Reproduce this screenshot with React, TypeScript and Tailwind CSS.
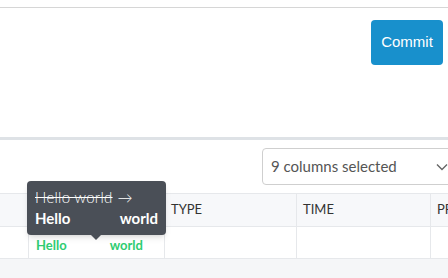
import React from 'react';

const cols = [
  { key: 'first', label: '', w: 'w-[29px]' },
  { key: 'diff', label: '', w: 'w-[136px]' },
  { key: 'type', label: 'TYPE', w: 'w-[132px]' },
  { key: 'time', label: 'TIME', w: 'w-[134px]' },
  { key: 'pr', label: 'PROPERTY', w: 'w-[134px]' },
];

const App: React.FC = () => {
  return (
    <div className="relative h-[278px] w-[448px] overflow-hidden bg-white font-['Lato',sans-serif]">
      {/* top panel */}
      <div className="h-[7px]" />
      <div className="h-px bg-[#d6d6d6]" />
      <div className="flex h-[129px] justify-end pr-[5px] pt-[12px]">
        <button className="h-[45px] w-[72px] rounded-[4px] bg-[#1890cc] font-['Liberation_Sans',sans-serif] text-[15px] text-white">
          Commit
        </button>
      </div>
      <div className="h-[3px] bg-[#dee2e6]" />

      {/* toolbar */}
      <div className="flex h-[53px] pl-[262px] pt-[8px]">
        <div className="flex h-[37px] w-[200px] shrink-0 items-center justify-between rounded-[4px] border border-[#cfcfcf] pl-[8px] pr-[13px] text-[15px] text-[#555]">
          <span>9 columns selected</span>
          <svg width="12" height="8" viewBox="0 0 12 8" fill="none">
            <path d="M1 1.5 6 6.5 11 1.5" stroke="#666" strokeWidth="1.4" />
          </svg>
        </div>
      </div>

      {/* table */}
      <div className="flex border-t border-[#e6e8eb] bg-[#f7f8fa]">
        {cols.map((c, i) => (
          <div
            key={c.key}
            className={`${c.w} flex h-[32px] shrink-0 items-center border-r border-[#e6e8eb] pl-[6px] text-[13px] text-[#333] ${i === 0 ? 'pl-0' : ''}`}
          >
            {c.label}
          </div>
        ))}
      </div>
      <div className="flex border-y border-[#e6e8eb] bg-white">
        {cols.map((c) => (
          <div key={c.key} className={`${c.w} flex h-[31px] shrink-0 items-end border-r border-[#e6e8eb] pb-[3px]`}>
            {c.key === 'diff' && (
              <div className="flex pl-[7px] text-[13px] font-bold text-[#2ecc71]">
                <span>Hello</span>
                <span className="ml-[43px]">world</span>
              </div>
            )}
          </div>
        ))}
      </div>
      <div className="h-[20px] bg-[#f5f6f8]" />

      {/* tooltip */}
      <div className="absolute left-[27px] top-[181px] w-[139px] rounded-[4px] bg-[#4a4f57] px-[8px] pt-[6px] pb-[6px] text-white shadow-md">
        <div className="flex items-center text-[15px] font-light leading-[20px] tracking-[0.3px]">
          <span className="line-through">Hello world</span>
          <span className="ml-[5px]">→</span>
        </div>
        <div className="flex justify-between text-[15px] font-bold leading-[22px]">
          <span>Hello</span>
          <span>world</span>
        </div>
        <div className="absolute left-[64px] top-full h-0 w-0 border-x-[5px] border-t-[5px] border-x-transparent border-t-[#4a4f57]" />
      </div>
    </div>
  );
};

export default App;
